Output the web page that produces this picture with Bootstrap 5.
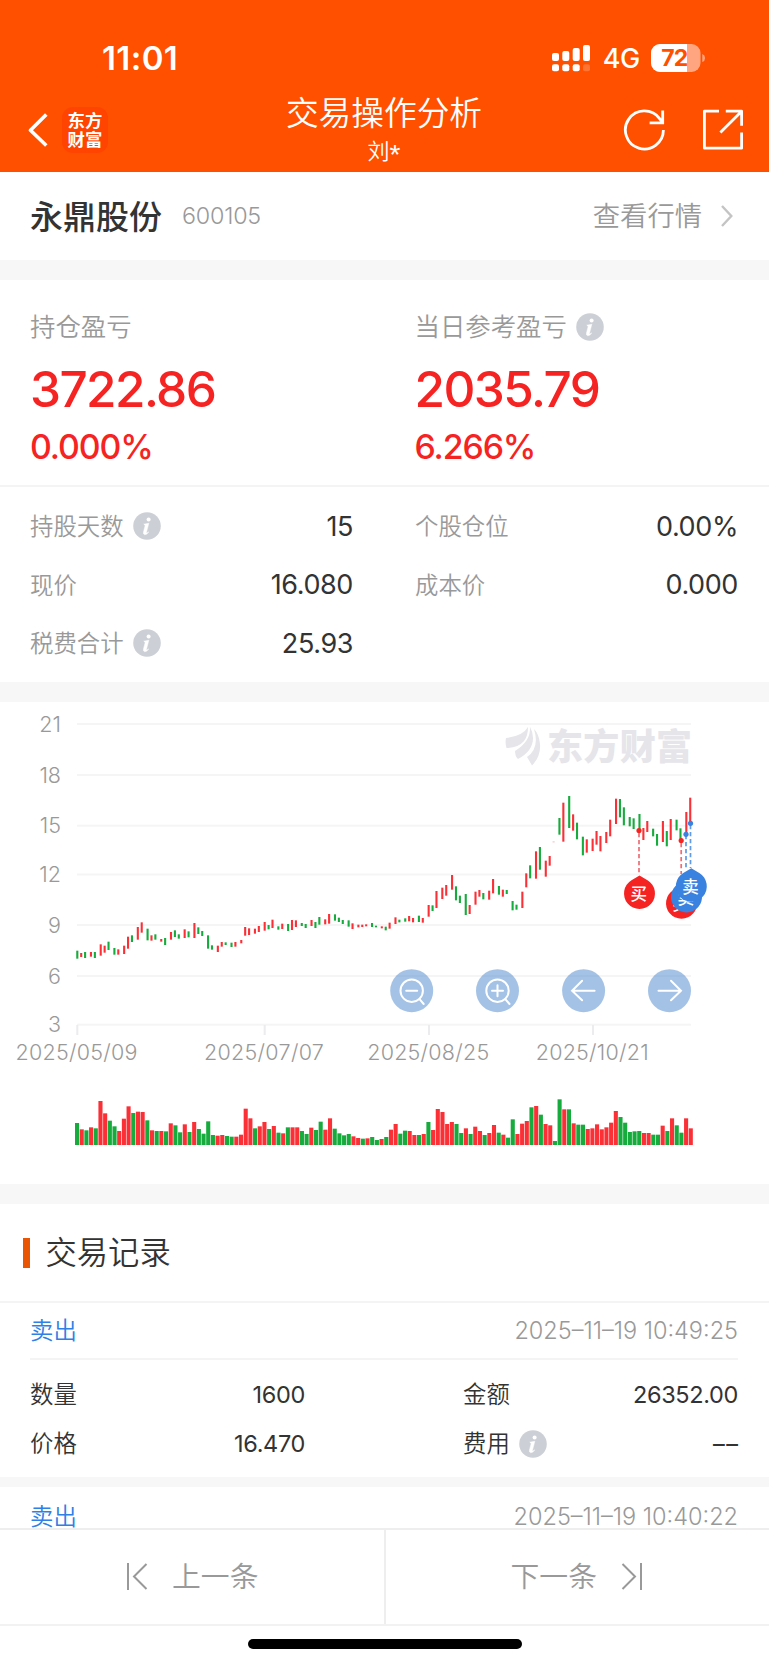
<!DOCTYPE html>
<html lang="zh-CN">
<head>
<meta charset="utf-8">
<meta name="viewport" content="width=device-width, initial-scale=1">
<title>交易操作分析</title>
<link href="https://cdn.jsdelivr.net/npm/bootstrap@5.3.0/dist/css/bootstrap.min.css" rel="stylesheet">
<style>
  :root { --brand: #ff5000; --rise: #f62323; --muted: #999; --ink: #333; --line: #f4f4f5; --num: Inter, "Liberation Sans", sans-serif; }
  body { font-family: "Noto Sans CJK SC", Inter, sans-serif; color: var(--ink); background: #fff; line-height: 1; font-weight: 350; }
  .screen { width: 769px; height: 1665px; overflow: hidden; }
  .num { font-family: var(--num); font-weight: 400; white-space: nowrap; }
  .muted { color: var(--muted); }
  .topbar { height: 172px; background: var(--brand); color: #fff; flex: none; }
  .statusbar { height: 84px; padding: 31px 63px 0 102px; }
  .clock { font-size: 33px; font-weight: 600; letter-spacing: .4px; }
  .net { font-size: 27px; font-weight: 500; margin-left: 13px; margin-right: 11px; letter-spacing: -.3px; }
  .titlebar { height: 88px; padding: 0 25px 0 28px; }
  .titlebar .side { width: 160px; height: 88px; padding-top: 3px; }
  .page-name { font-size: 32.7px; line-height: 40px; padding-top: 7px; margin-left: -4px; }
  .holder { font-size: 22px; line-height: 30px; padding-top: 3px; margin-left: -4px; }
  .holder span { font-family: "Liberation Sans", sans-serif; font-size: 28px; line-height: 20px; vertical-align: -5px; }
  .app-badge { width: 46px; height: 46px; border-radius: 11px; background: #ff4300; font-size: 17.4px; line-height: 19px; font-weight: 700; padding-top: 3px; margin-left: 13px; text-align: center; }
  .band { height: 20px; background: #f7f7f7; flex: none; }
  .band-thin { height: 10px; }
  .stock { height: 88px; padding: 0 36px 0 30px; }
  .stock-name, .more { margin-top: -2px; }
  .stock-name { font-size: 33px; font-weight: 500; }
  .stock-code { font-size: 23.3px; margin-left: 20px; font-weight: 300; letter-spacing: -.2px; }
  .more { font-size: 27.3px; margin-right: 19px; }
  .profit { height: 207px; border-bottom: 2px solid var(--line); padding: 28px 0 0 30px; }
  .half { width: 384.5px; flex: none; }
  .cap { font-size: 25.4px; height: 36px; }
  .cap .info { position: relative; top: 1px; }
  .big { font-size: 49.5px; font-weight: 550; color: var(--rise); height: 50px; line-height: 50px; margin-top: 20px; letter-spacing: -1.6px; }
  .pct { font-size: 33.8px; font-weight: 500; color: var(--rise); height: 40px; line-height: 40px; margin-top: 13px; letter-spacing: -1.1px; }
  .metrics { height: 195px; padding: 10px 31px 0 30px; }
  .metrics .pair { height: 58.6px; width: 323px; font-size: 23.4px; }
  .metrics .num { font-size: 27px; font-weight: 370; letter-spacing: -.4px; }
  .pair > span:first-child { margin-top: -1px; }
  .info { width: 28px; height: 28px; margin-left: 9px; flex: none; }
  .chart { height: 482px; }
  .chart svg { display: block; }
  .axis { font-family: var(--num); font-size: 21.5px; fill: #999; font-weight: 300; }
  .sec-title { height: 97px; padding-left: 23px; font-size: 31.3px; }
  .sec-title i { width: 6.5px; height: 30px; background: #ea5504; margin-right: 16px; }
  .sec-title span { margin-top: -4px; }
  .rec { border-top: 2px solid var(--line); padding: 0 31px 0 30px; }
  .rec-head { height: 57px; border-bottom: 2px solid var(--line); font-size: 23.4px; }
  .rec-head span:first-child { margin-top: -1px; }
  .side-sell { color: #2f80e6; }
  .rec .num { font-size: 23.5px; font-weight: 370; letter-spacing: -.35px; }
  .rec-head .num.muted { letter-spacing: 0; font-weight: 330; }
  .rec .num.dashes { letter-spacing: 1.5px; margin-right: -1.5px; }
  .rec-body { height: 117px; padding-top: 10px; }
  .rec .pair { height: 49px; width: 275px; font-size: 23.4px; }
  .pager { height: 98px; border-top: 2px solid #eee; border-bottom: 2px solid #f2f2f2; flex: none; font-size: 28.8px; color: #999; background: #fff; }
  .pager .half + .half { border-left: 2px solid #eee; margin-left: -1px; }
  .pager span { margin-top: -3px; }
  .home { height: 39px; flex: none; padding-top: 13px; }
  .home div { width: 274px; height: 10px; border-radius: 5px; background: #000; }
</style>
</head>
<body>
<svg width="0" height="0" class="position-absolute">
  <symbol id="info" viewBox="0 0 28 28">
    <circle cx="14" cy="14" r="13.8" fill="#ccd0d6"/>
    <circle cx="15.6" cy="7.6" r="2" fill="#fff"/>
    <path d="M10.8 12.2 L15.8 11.3 L13.4 20.4 Q13.2 21.6 15.8 20 Q13.6 23 11.4 22.6 Q9.9 22.1 10.5 19.9 L12.2 13.4 Z" fill="#fff" stroke="#fff" stroke-width=".5"/>
  </symbol>
</svg>
<div class="screen d-flex flex-column">
  <header class="topbar">
    <div class="statusbar d-flex justify-content-between align-items-start">
      <div class="clock num pt-2 mt-1" style="line-height:30px">11:01</div>
      <div class="d-flex align-items-center" style="height:54px">
        <svg width="38" height="28" viewBox="0 0 38 28" fill="#fff">
          <rect x="0" y="9" width="7" height="8" rx="2"/><rect x="10.3" y="7" width="7" height="10" rx="2"/><rect x="20.7" y="4" width="7" height="13" rx="2"/><rect x="31" y="1" width="7" height="16" rx="2"/>
          <rect x="0" y="20.3" width="7" height="7" rx="2"/><rect x="10.3" y="20.3" width="7" height="7" rx="2"/><rect x="20.7" y="20.3" width="7" height="7" rx="2"/><rect x="31" y="20.3" width="7" height="7" rx="2" opacity=".2"/>
        </svg>
        <span class="net num">4G</span>
        <svg width="55" height="28" viewBox="0 0 55 28">
          <clipPath id="cell"><rect width="49.5" height="28" rx="9"/></clipPath>
          <g clip-path="url(#cell)"><rect width="50" height="28" fill="#ffa680"/><rect width="36" height="28" fill="#fff"/></g>
          <path d="M51.3 10 Q54 11 54 14 Q54 17 51.3 18 Z" fill="#ffa680"/>
          <text x="23.8" y="22.4" text-anchor="middle" font-family="Inter" font-weight="700" font-size="23" textLength="27" fill="#ff5000">72</text>
        </svg>
      </div>
    </div>
    <div class="titlebar d-flex justify-content-between">
      <div class="side d-flex align-items-center">
        <svg width="21" height="34" viewBox="0 0 21 34" fill="none" stroke="#fff" stroke-width="3.6"><path d="M18.3 1.5 L2.5 17.3 L18.3 32.5" stroke-linejoin="round"/></svg>
        <div class="app-badge">东方<br>财富</div>
      </div>
      <div class="text-center">
        <div class="page-name">交易操作分析</div>
        <div class="holder">刘<span>*</span></div>
      </div>
      <div class="side d-flex align-items-center justify-content-end">
        <svg width="44" height="44" viewBox="0 0 44 44" fill="none" stroke="#fff" stroke-width="2.8"><path d="M40.4 22 A19 19 0 1 1 36.4 10.3 L39.6 14.6 M39.7 2.4 V14.9 H26.6"/></svg>
        <svg width="77" height="44" viewBox="-33 0 77 44" fill="none" stroke="#fff" stroke-width="2.8"><path d="M19 3.2 H4.4 V40.2 H41.6 V24.4 M25.8 3.2 H41.6 V17.8 M41.2 3.8 L20.4 24.6" stroke-linejoin="round"/></svg>
      </div>
    </div>
  </header>

  <main class="flex-grow-1 overflow-hidden">
    <section class="stock d-flex align-items-center">
      <span class="stock-name">永鼎股份</span>
      <span class="stock-code num muted">600105</span>
      <span class="more muted ms-auto">查看行情</span>
      <svg width="12" height="22" viewBox="0 0 12 22" fill="none" stroke="#c4c4c4" stroke-width="2.4"><path d="M1 1 L10.3 11 L1 21"/></svg>
    </section>
    <div class="band"></div>
    <section class="profit d-flex">
      <div class="half">
        <div class="cap muted d-flex align-items-center">持仓盈亏</div>
        <div class="big num">3722.86</div>
        <div class="pct num">0.000%</div>
      </div>
      <div class="half">
        <div class="cap muted d-flex align-items-center">当日参考盈亏<svg class="info"><use href="#info"/></svg></div>
        <div class="big num">2035.79</div>
        <div class="pct num">6.266%</div>
      </div>
    </section>
    <section class="metrics d-flex flex-wrap justify-content-between align-content-start">
      <div class="pair d-flex align-items-center"><span class="muted">持股天数</span><svg class="info"><use href="#info"/></svg><span class="num ms-auto">15</span></div>
      <div class="pair d-flex align-items-center"><span class="muted">个股仓位</span><span class="num ms-auto">0.00%</span></div>
      <div class="pair d-flex align-items-center"><span class="muted">现价</span><span class="num ms-auto">16.080</span></div>
      <div class="pair d-flex align-items-center"><span class="muted">成本价</span><span class="num ms-auto">0.000</span></div>
      <div class="pair d-flex align-items-center"><span class="muted">税费合计</span><svg class="info"><use href="#info"/></svg><span class="num ms-auto">25.93</span></div>
    </section>
    <div class="band"></div>
    <section class="chart">
      <svg width="769" height="482" viewBox="0 0 769 482">
        <g id="grid"></g>
        <g fill="#e5e5ea">
          <path d="M528 25 Q523 34 506 36 Q505 41 506.500 46 Q518 46 524 39 Q528 34 528 25 Z"/>
          <path d="M530 25 Q531 39 515 49 Q515 54 518 57 Q533 49 533 36 Q533 30 530 25 Z"/>
          <path d="M534 27 Q540 46 527 55 Q530 60 532 63.500 Q541 54 540 42 Q539 32 534 27 Z"/>
          <text x="547" y="58" font-family="Noto Sans CJK SC" font-weight="900" font-size="36" textLength="145">东方财富</text>
        </g>
        <g id="candles"></g>
        <g id="volume"></g>
        <g fill="none" stroke-width="1.7" stroke-dasharray="4.300 2.700">
          <path d="M639 131 V173 M681.200 141 V172" stroke="#ee6c74"/>
          <path d="M686 133 V166 M690.500 123 V166" stroke="#5f9be8"/>
        </g>
        <g fill="#f62323"><circle cx="639" cy="128.500" r="2.600"/><circle cx="681.200" cy="138.500" r="2.600"/></g>
        <g fill="#3a82e0"><circle cx="686" cy="132.300" r="2.600"/><circle cx="690.500" cy="121.300" r="2.600"/></g>
        <g font-family="Noto Sans CJK SC" font-size="16.500" font-weight="500" text-anchor="middle">
          <g transform="translate(639.500 191.500)"><path d="M0 -18 L8 -13.300 A15.500 15.500 0 1 1 -8 -13.300 Z" fill="#f62323"/><text x="-.7" y="6.500" fill="#fff">买</text></g>
          <g transform="translate(681.500 201.300)"><path d="M0 -18 L8 -13.300 A15.500 15.500 0 1 1 -8 -13.300 Z" fill="#f62323"/><text x="-.7" y="6.500" fill="#fff">买</text></g>
          <g transform="translate(686.500 195)"><path d="M0 -18 L8 -13.300 A15.500 15.500 0 1 1 -8 -13.300 Z" fill="#3a82e0"/><text x="-.7" y="6.500" fill="#fff">卖</text></g>
          <g transform="translate(691.300 184.300)"><path d="M0 -18 L8 -13.300 A15.500 15.500 0 1 1 -8 -13.300 Z" fill="#3a82e0"/><text x="-.7" y="6.500" fill="#fff">卖</text></g>
        </g>
        <g id="tools" fill="none" stroke="#fff" stroke-width="2" stroke-linecap="round">
          <g transform="translate(411.700 288.700)"><circle r="21.500" fill="#4a86cb" fill-opacity=".5" stroke="none"/><circle r="11.200"/><path d="M-5.500 0 H5.500 M7.800 8.500 L12 13.300"/></g>
          <g transform="translate(497.500 288.700)"><circle r="21.500" fill="#4a86cb" fill-opacity=".5" stroke="none"/><circle r="11.200"/><path d="M-5.500 0 H5.500 M0 -5.500 V5.500 M7.800 8.500 L12 13.300"/></g>
          <g transform="translate(583.600 288.700)"><circle r="21.500" fill="#4a86cb" fill-opacity=".5" stroke="none"/><path d="M11 0 H-11.300 M-1.500 -10 L-11.500 0 L-1.500 9.500"/></g>
          <g transform="translate(669.500 288.700)"><circle r="21.500" fill="#4a86cb" fill-opacity=".5" stroke="none"/><path d="M-11 0 H11.300 M1.500 -10 L11.500 0 L1.500 9.500"/></g>
        </g>
      </svg>
    </section>
    <div class="band"></div>
    <section>
      <div class="sec-title d-flex align-items-center"><i></i><span>交易记录</span></div>
      <article class="rec">
        <div class="rec-head d-flex align-items-center justify-content-between"><span class="side-sell">卖出</span><span class="num muted">2025–11–19 10:49:25</span></div>
        <div class="rec-body d-flex flex-wrap justify-content-between align-content-start">
          <div class="pair d-flex align-items-center"><span>数量</span><span class="num ms-auto">1600</span></div>
          <div class="pair d-flex align-items-center"><span>金额</span><span class="num ms-auto">26352.00</span></div>
          <div class="pair d-flex align-items-center"><span>价格</span><span class="num ms-auto">16.470</span></div>
          <div class="pair d-flex align-items-center"><span>费用</span><svg class="info"><use href="#info"/></svg><span class="num dashes ms-auto">––</span></div>
        </div>
      </article>
      <div class="band band-thin"></div>
      <article class="rec border-white">
        <div class="rec-head d-flex align-items-center justify-content-between"><span class="side-sell">卖出</span><span class="num muted">2025–11–19 10:40:22</span></div>
      </article>
    </section>
  </main>

  <nav class="pager d-flex">
    <div class="half d-flex align-items-center justify-content-center">
      <svg class="me-4" width="22" height="30" viewBox="0 0 22 30" fill="none" stroke="#999" stroke-width="2"><path d="M2 1 V28 M20.500 2 L8 14.500 L20.500 27"/></svg><span>上一条</span>
    </div>
    <div class="half d-flex align-items-center justify-content-center"><span>下一条</span>
      <svg class="ms-4" width="22" height="30" viewBox="0 0 22 30" fill="none" stroke="#999" stroke-width="2"><path d="M20 1 V28 M1.500 2 L14 14.500 L1.500 27"/></svg>
    </div>
  </nav>
  <div class="home d-flex justify-content-center"><div></div></div>
</div>
<script>
  const NS = 'http://www.w3.org/2000/svg';
  const add = (id, tag, attrs, text) => {
    const el = document.createElementNS(NS, tag);
    for (const k in attrs) el.setAttribute(k, attrs[k]);
    if (text) el.textContent = text;
    document.getElementById(id).appendChild(el);
  };
  const RISE = '#fb3037', FALL = '#16ab3c';

  // price grid and date axis
  [[21, 22], [18, 73], [15, 123.7], [12, 172.5], [9, 223], [6, 274], [3, 322.7]].forEach(([v, y]) => {
    add('grid', 'rect', {x: 77, y: y - 1, width: 614, height: 2, fill: '#f5f5f6'});
    add('grid', 'text', {x: 61, y: y + 7.7, 'text-anchor': 'end', class: 'axis'}, String(v));
  });
  [['2025/05/09', 77.3, 122], ['2025/07/07', 264.7, 120], ['2025/08/25', 429, 122], ['2025/10/21', 593, 113]].forEach(([d, x, w]) => {
    add('grid', 'rect', {x: x - 1, y: 323, width: 2, height: 10, fill: '#ececee'});
    add('grid', 'text', {x: x - w / 2 - .8, y: 358.3, textLength: w, class: 'axis'}, d);
  });

  // daily high-low ranges, in thirds of a pixel from each segment's base
  const ranges = [
    [414, 'g332-356 r339-351 g336-354 r336-350 g336-354 r313-347 r317-338 g305-330 g324-344 r328-344 r317-342 r290-326 g286-306 r261-299 r247-278 g266-301 r286-302 g283-299 r297-305 g294-315 r276-299 g271-291 g283-296 r268-294 g274-292 r249-294 g262-282 g273-288 g286-326 g316-329 r317-336 r306-320 g307-315 g308-321 r306-320 r300-310 r261-287 r265-285 r266-281 r258-276 r246-272 g255-268 r239-264 g259-269'],
    [234, 'r431-447 g432-453 r420-450 r421-441 g429-438 g432-444 r420-438 g426-444 g411-434 r418-433 r402-431 g403-422 g413-426 g420-432 g421-440 r430-447 r434-442 r434-441 r433-439 g429-441 g437-442 r439-445 g440-451 r428-446 r412-432 g419-427 g415-425 r408-424 r414-427 g407-426 r414-428 r375-410 g376-393 r333-384 r323-357 r315-347 r285-329 g319-361 g347-369 g342-405 r375-402 r335-374 r330-350 g339-358'],
    [-6, 'r572-599 r537-580 g558-584 r569-590 g570-582 g603-631 g614-629 r575-624 r520-562 g496-535 r454-536 g441-509 r482-530 r468-497 p423-428 g354-404 r308-425 g288-384 r343-392 g368-418 g410-466 r418-458 r416-453 r393-434 r408-454 r396-429 r359-409 r296-372 g297-352 g322-376 g351-379 g355-387 g342-390 r384-420 r363-396 g386-409 g402-437 r363-426 g393-439 r357-420 g359-391 g385-420 r336-400 r293-370']
  ];
  let i = 0;
  ranges.forEach(([base, s]) => s.split(' ').forEach(t => {
    const [hi, lo] = t.slice(1).split('-').map(Number);
    const x = 77.3 + 1.952 * Math.floor(2.4 * i + 1e-6);
    add('candles', 'rect', {x: (x - 1.05).toFixed(2), y: ((hi + base) / 3).toFixed(2), width: 2.1, height: ((lo - hi) / 3).toFixed(2), fill: {r: RISE, g: FALL, p: '#fcd5d8'}[t[0]]});
    i++;
  }));

  // volume, same units, measured down from each segment's floor
  const volumes = [
    [915, 'g849 r868 g871 r862 g865 r783 r820 g842 g859 r873 r836 r799 g819 r815 r816 g841 r871 g873 r873 g874 r850 g856 g877 r853 g876 r846 g867 g881 g844 g885 r887 r885 g888 g890 r890 r884 r806 r835 g865 r859 r846 g867 r858'],
    [1095, 'g1058 r1060 g1042 r1042 r1042 g1053 g1062 r1043 g1050 g1025 r1049 r1015 g1046 g1060 g1066 g1062 r1069 r1074 g1076 r1075 g1071 g1080 r1077 g1071 r1049 r1032 g1061 g1052 r1053 r1065 g1065 r1062 g1026 r1050 r987 r996 r1032 r1026 g1032 g1059 r1045 g1062 r1040 r1053'],
    [645, 'g615 r609 r585 g608 r614 g623 g568 r612 r581 r573 g532 r528 g554 r582 r586 g633 g508 r538 g538 r580 g584 g584 r597 r595 r583 r598 r592 r578 r543 g561 g578 g606 g604 g603 r609 r609 g614 g614 r587 g603 r565 g586 g608 r565 r595']
  ];
  i = 0;
  volumes.forEach(([floor, s]) => s.split(' ').forEach(t => {
    const h = (floor - Number(t.slice(1))) / 3;
    add('volume', 'rect', {x: (75 + 4.685 * i).toFixed(2), y: (443 - h).toFixed(2), width: 4.1, height: h.toFixed(2), fill: t[0] === 'r' ? RISE : FALL});
    i++;
  }));
</script>
<script src="https://cdn.jsdelivr.net/npm/bootstrap@5.3.0/dist/js/bootstrap.bundle.min.js"></script>
</body>
</html>
